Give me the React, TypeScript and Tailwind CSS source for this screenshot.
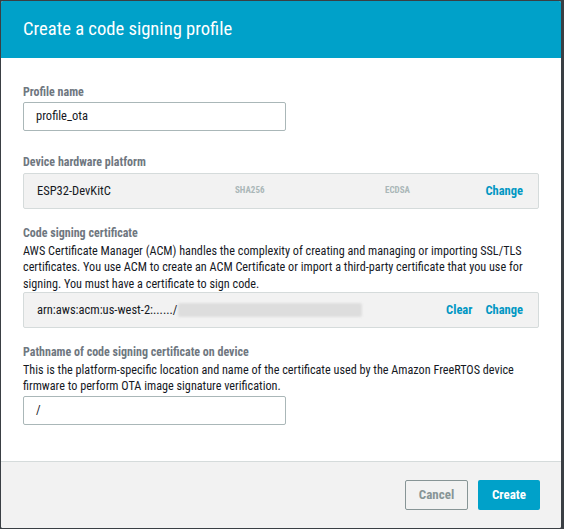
import React from "react";

const font = { fontFamily: "'Roboto Condensed', Lato, sans-serif" };

export default function App() {
  return (
    <div className="w-[564px] h-[529px] bg-[#3a3f44] pl-[1px] pt-[1px] pr-[3px] pb-[1px]" style={font}>
      <div className="flex flex-col h-full bg-white rounded-[2px] overflow-hidden">
        <div className="h-[57px] bg-[#00a1c9] flex items-center pl-[22px] shrink-0">
          <h1 className="text-[18.6px] text-white leading-none">Create a code signing profile</h1>
        </div>
        <div className="flex-1 px-[22px] pt-[26px]">
          <div className="text-[12px] font-bold text-[#6f777f] leading-[16px]">Profile name</div>
          <div className="mt-[2px] w-[263px] h-[29px] border border-[#aab7b8] rounded-[2px] flex items-center pl-[12px] text-[12.5px] text-[#16191f]">profile_ota</div>

          <div className="mt-[23px] text-[12px] font-bold text-[#6f777f] leading-[16px]">Device hardware platform</div>
          <div className="mt-[3px] w-[516px] h-[36px] bg-[#f2f2f2] border border-[#d5dbdb] rounded-[2px] flex items-center pl-[13px] pr-[15px] text-[12.5px] text-[#16191f]">
            <span className="w-[198px]">ESP32-DevKitC</span>
            <span className="w-[150px] text-[9px] font-bold text-[#aab7b8]">SHA256</span>
            <span className="text-[9px] font-bold text-[#aab7b8]">ECDSA</span>
            <span className="ml-auto font-bold text-[#0097c3]">Change</span>
          </div>

          <div className="mt-[16px] text-[12px] font-bold text-[#6f777f] leading-[16px]">Code signing certificate</div>
          <p className="mt-[1.5px] text-[12.2px] text-[#16191f] leading-[16.5px] w-[500px]">
            AWS Certificate Manager (ACM) handles the complexity of creating and managing or importing SSL/TLS certificates. You use ACM to create an ACM Certificate or import a third-party certificate that you use for signing. You must have a certificate to sign code.
          </p>
          <div className="w-[516px] h-[36px] bg-[#f2f2f2] border border-[#d5dbdb] rounded-[2px] flex items-center pl-[13px] pr-[15px] text-[12.5px] text-[#16191f]">
            <span>arn:aws:acm:us-west-2:....../</span>
            <span className="ml-[1px] w-[184px] h-[14px] bg-[#d9d9d9] rounded-[2px] opacity-80 blur-[1px]"></span>
            <span className="ml-auto font-bold text-[#0097c3]">Clear</span>
            <span className="ml-[13px] font-bold text-[#0097c3]">Change</span>
          </div>

          <div className="mt-[16px] text-[12px] font-bold text-[#6f777f] leading-[16px]">Pathname of code signing certificate on device</div>
          <p className="mt-[1.5px] text-[12.2px] text-[#16191f] leading-[16.5px] w-[500px]">
            This is the platform-specific location and name of the certificate used by the Amazon FreeRTOS device firmware to perform OTA image signature verification.
          </p>
          <div className="mt-[1px] w-[263px] h-[29px] border border-[#aab7b8] rounded-[2px] flex items-center pl-[12px] text-[12.5px] text-[#16191f]">/</div>
        </div>
        <div className="h-[67px] shrink-0 bg-[#f2f2f2] border-t border-[#d5dbdb] flex items-center justify-end pr-[21px] gap-[10px]">
          <button className="w-[63px] h-[30px] border border-[#879596] rounded-[2px] bg-transparent text-[13px] font-bold text-[#879596]">Cancel</button>
          <button className="w-[62px] h-[30px] rounded-[2px] bg-[#00a1c9] text-[13px] font-bold text-white">Create</button>
        </div>
      </div>
    </div>
  );
}
